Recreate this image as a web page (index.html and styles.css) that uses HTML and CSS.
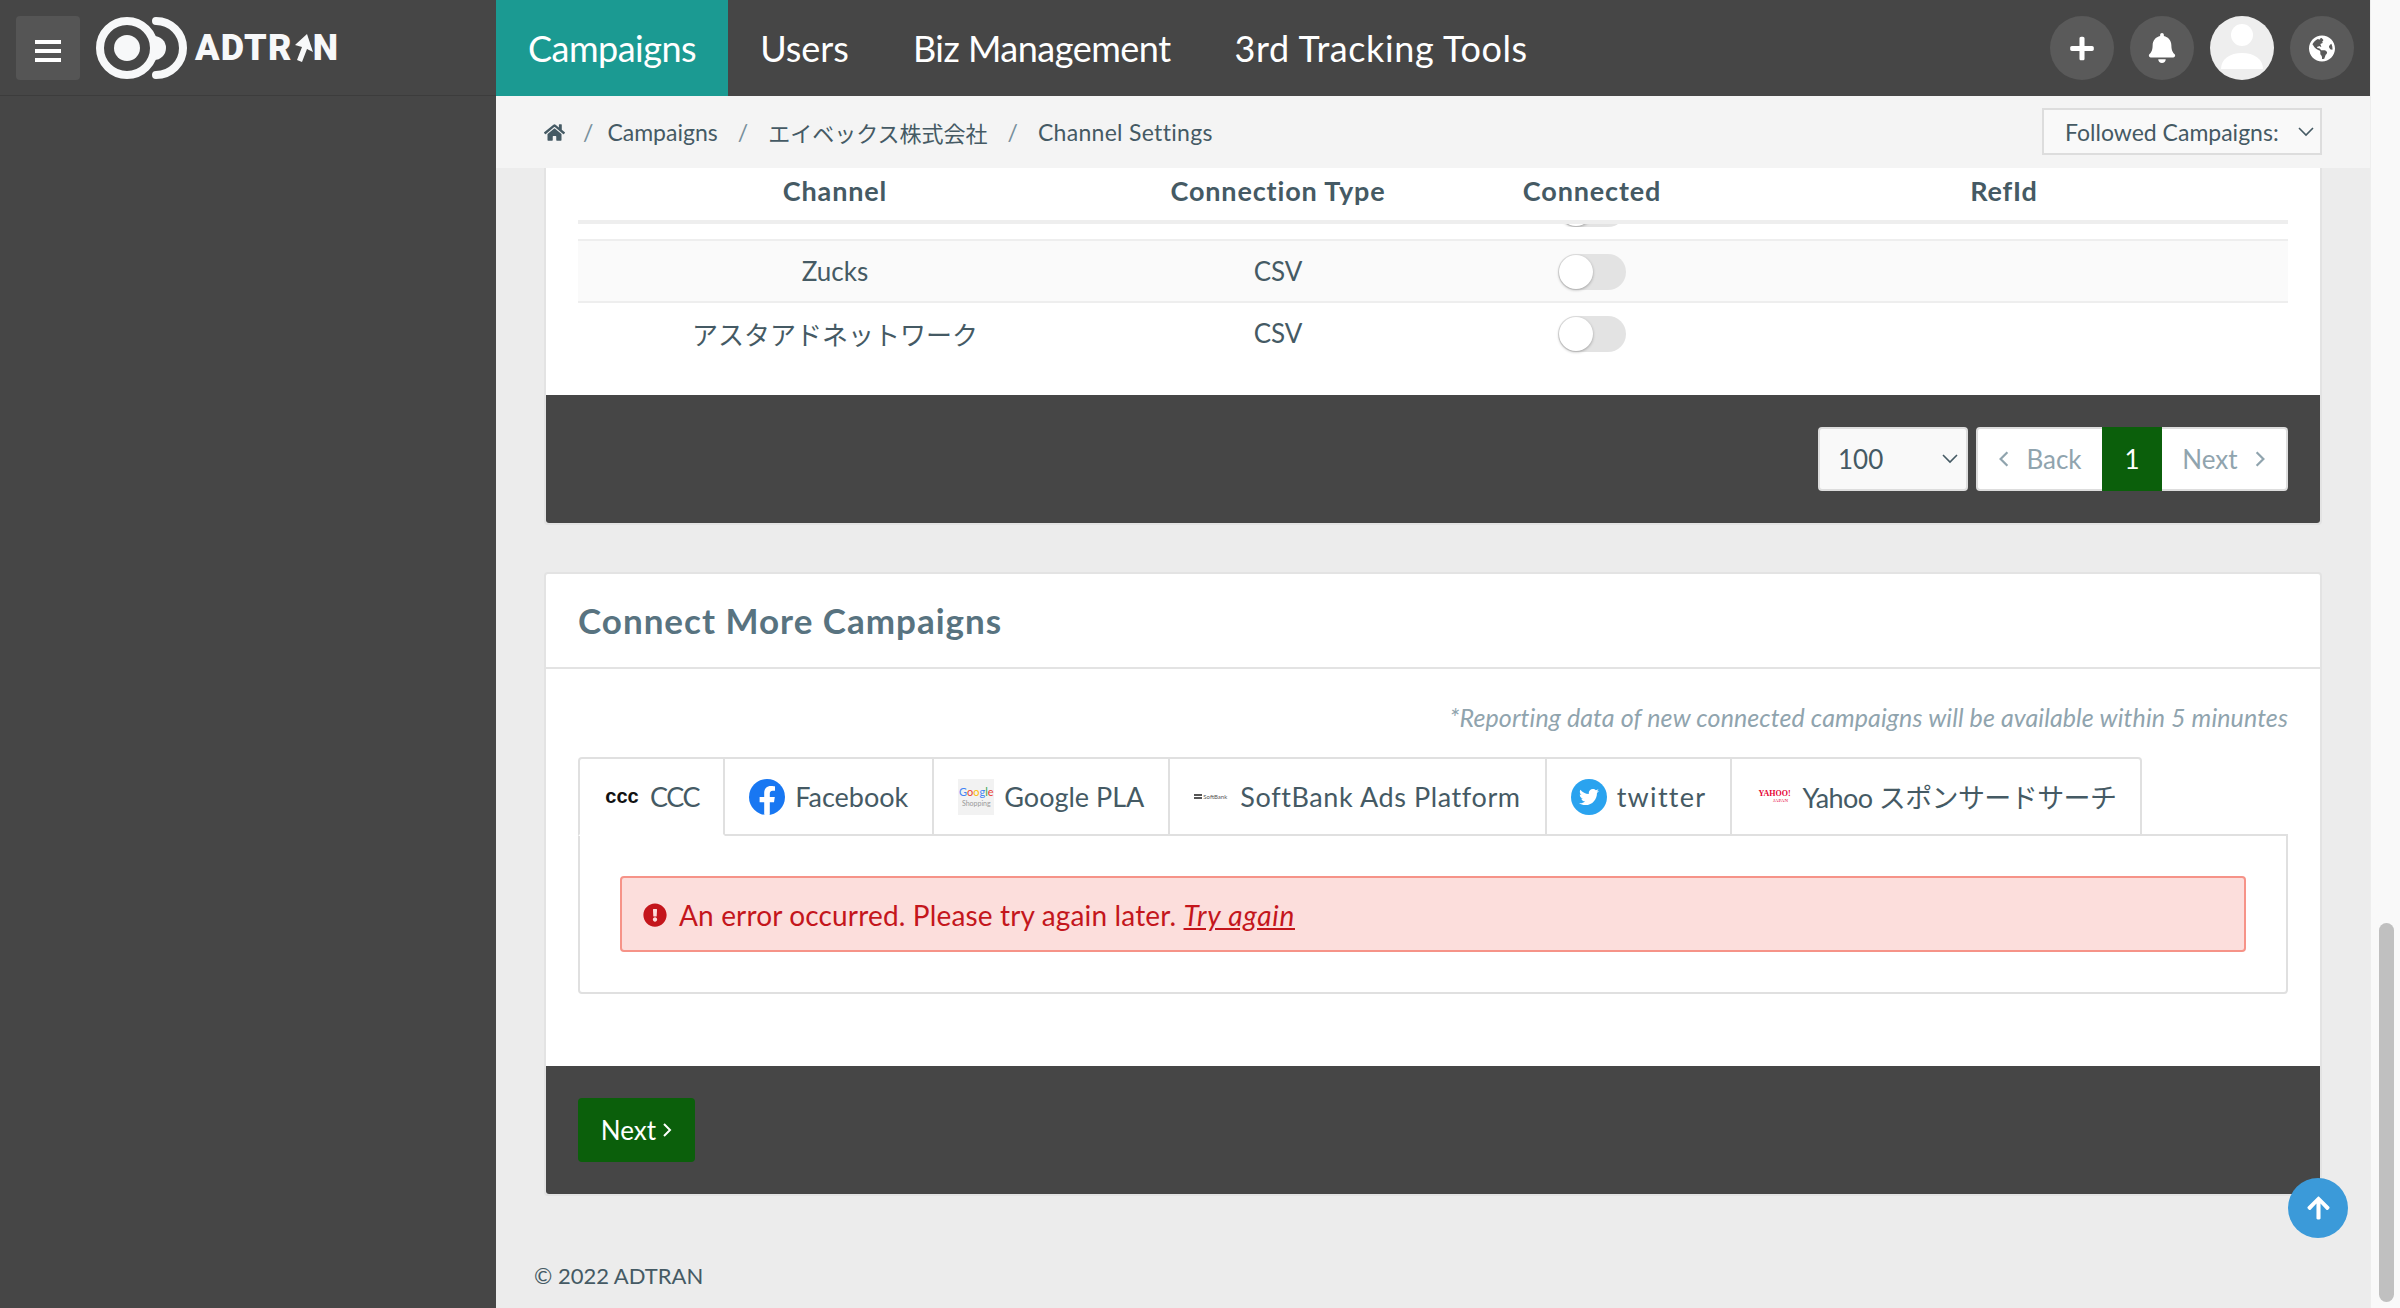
FILE: index.html
```html
<!DOCTYPE html>
<html lang="en">
<head>
    <meta charset="UTF-8">
    <meta name="viewport" content="width=device-width, initial-scale=1.0">
    <title>Channel Settings</title>
    <link rel="stylesheet" href="styles.css">
</head>
<body>
    <div class="page">
        <div class="app">
            <header class="topbar">
                <div class="brand">
                    <button class="menu-button"><span></span><span></span><span></span></button>
                    <svg class="logo-mark" viewBox="0 0 92 64">
                        <circle cx="31" cy="32" r="27" fill="none" stroke="#f7f8f9" stroke-width="8"/>
                        <circle cx="31" cy="32" r="13" fill="#f7f8f9"/>
                        <path d="M58 20A12 12 0 0 1 58 44Z" fill="#f7f8f9"/>
                        <path d="M60 5A27 27 0 0 1 60 59" fill="none" stroke="#f7f8f9" stroke-width="8" stroke-linecap="round"/>
                    </svg>
                    <span class="logo-text">ADTR<svg class="logo-arrow" viewBox="0 0 20 28"><path d="M14 0L20 18L14 15L9 28L4 26L9 13L2 11Z" fill="#f7f8f9"/></svg>N</span>
                </div>
                <nav class="nav">
                    <a class="nav-item nav-campaigns active">Campaigns</a>
                    <a class="nav-item">Users</a>
                    <a class="nav-item nav-biz">Biz Management</a>
                    <a class="nav-item nav-tools">3rd Tracking Tools</a>
                </nav>
                <div class="actions">
                    <button class="round-button">
                        <svg class="icon-plus" viewBox="0 0 448 512"><path d="M416 208H272V64c0-17.67-14.33-32-32-32h-32c-17.67 0-32 14.33-32 32v144H32c-17.67 0-32 14.33-32 32v32c0 17.67 14.33 32 32 32h144v144c0 17.67 14.33 32 32 32h32c17.67 0 32-14.33 32-32V304h144c17.67 0 32-14.33 32-32v-32c0-17.67-14.33-32-32-32z"/></svg>
                    </button>
                    <button class="round-button">
                        <svg class="icon-bell" viewBox="0 0 448 512"><path d="M224 512c35.32 0 63.97-28.65 63.97-64H160.03c0 35.35 28.65 64 63.97 64zm215.39-149.71c-19.32-20.76-55.47-51.99-55.47-154.29 0-77.7-54.48-139.9-127.94-155.16V32c0-17.67-14.32-32-31.98-32s-31.98 14.33-31.98 32v20.84C118.56 68.1 64.08 130.3 64.08 208c0 102.3-36.15 133.53-55.47 154.29-6 6.45-8.66 14.16-8.61 21.71.11 16.4 12.98 32 32.1 32h383.8c19.12 0 32-15.6 32.1-32 .05-7.55-2.61-15.27-8.61-21.71z"/></svg>
                    </button>
                    <button class="round-button avatar">
                        <svg viewBox="0 0 64 64"><circle cx="32" cy="19" r="11" fill="#fff"/><path d="M11 53C11 43 20 37 32 37S53 43 53 53Z" fill="#fff"/></svg>
                    </button>
                    <button class="round-button">
                        <svg class="icon-globe" viewBox="0 0 496 512"><path d="M248 8C111.03 8 0 119.03 0 256s111.03 248 248 248 248-111.03 248-248S384.97 8 248 8zm82.29 357.6c-3.9 3.88-7.99 7.95-11.31 11.28-2.99 3-5.1 6.7-6.17 10.71-1.51 5.66-2.73 11.38-4.77 16.87l-17.39 46.85c-13.76 3-28 4.69-42.65 4.69v-27.38c1.69-12.62-7.64-36.26-22.63-51.25-6-6-9.37-14.14-9.37-22.63v-32.01c0-11.64-6.27-22.34-16.46-27.97-14.37-7.95-34.81-19.06-48.81-26.11-11.48-5.78-22.1-13.14-31.65-21.75l-.8-.72a114.792 114.792 0 0 1-18.06-20.74c-9.38-13.77-24.66-36.42-34.59-51.14 20.47-45.5 57.36-82.04 103.2-101.89l24.01 12.01C203.48 89.74 216 82.01 216 70.11v-11.3c7.99-1.29 16.12-2.11 24.39-2.4l28.3 28.3c6.25 6.25 6.25 16.38 0 22.63L264 112l-10.34 10.34c-3.12 3.12-3.12 8.19 0 11.31l4.69 4.69c3.12 3.12 3.12 8.19 0 11.31l-8 8a8.008 8.008 0 0 1-5.66 2.34h-8.99c-2.08 0-4.08.81-5.58 2.27l-9.92 9.65a8.008 8.008 0 0 0-1.58 9.31l15.59 31.19c2.66 5.32-1.21 11.58-7.15 11.58h-5.64c-1.93 0-3.79-.7-5.24-1.96l-9.28-8.06a16.017 16.017 0 0 0-15.55-3.1l-31.17 10.39a11.95 11.95 0 0 0-8.17 11.34c0 4.53 2.56 8.66 6.61 10.69l11.08 5.54c9.41 4.71 19.79 7.16 30.31 7.16s22.59 27.29 32 32h66.75c8.49 0 16.62 3.37 22.63 9.37l13.69 13.69a30.503 30.503 0 0 1 8.93 21.57 46.536 46.536 0 0 1-13.72 32.98zM417 274.25c-5.79-1.45-10.84-5-14.15-9.97l-17.98-26.97a23.97 23.97 0 0 1 0-26.62l19.59-29.38c2.32-3.47 5.5-6.29 9.24-8.15l12.98-6.49C440.2 193.59 448 223.87 448 256c0 8.67-.74 17.16-1.82 25.54L417 274.25z"/></svg>
                    </button>
                </div>
            </header>

            <div class="body-row">
                <aside class="sidebar"></aside>
                <main class="main">
                    <div class="breadcrumb-bar">
                        <div class="breadcrumb">
                            <svg class="icon-home" viewBox="0 0 576 512"><path d="M280.37 148.26L96 300.11V464a16 16 0 0 0 16 16l112.06-.29a16 16 0 0 0 15.92-16V368a16 16 0 0 1 16-16h64a16 16 0 0 1 16 16v95.64a16 16 0 0 0 16 16.05L464 480a16 16 0 0 0 16-16V300L295.67 148.26a12.19 12.19 0 0 0-15.3 0zM571.6 251.47L488 182.56V44.05a12 12 0 0 0-12-12h-56a12 12 0 0 0-12 12v72.61L318.47 43a48 48 0 0 0-61 0L4.34 251.47a12 12 0 0 0-1.6 16.9l25.5 31A12 12 0 0 0 45.15 301l235.22-193.74a12.19 12.19 0 0 1 15.3 0L530.9 301a12 12 0 0 0 16.9-1.6l25.5-31a12 12 0 0 0-1.7-16.93z"/></svg>
                            <span class="sep sep-first">/</span>
                            <span>Campaigns</span>
                            <span class="sep">/</span>
                            <span class="crumb-jp">エイベックス株式会社</span>
                            <span class="sep">/</span>
                            <span class="crumb-last">Channel Settings</span>
                        </div>
                        <div class="followed">
                            <span>Followed Campaigns:</span>
                            <svg class="chevron" viewBox="0 0 16 10"><path d="M1 1L8 8L15 1" fill="none" stroke="#455a64" stroke-width="1.6"/></svg>
                        </div>
                    </div>

                    <div class="content">
                        <section class="card">
                            <div class="card-body table-body">
                                <table class="channel-table">
                                    <thead>
                                        <tr>
                                            <th class="col-channel">Channel</th>
                                            <th class="col-type">Connection Type</th>
                                            <th class="col-connected">Connected</th>
                                            <th class="col-ref">RefId</th>
                                        </tr>
                                    </thead>
                                    <tbody>
                                        <tr class="row-cut">
                                            <td></td><td></td>
                                            <td><div class="cut"><span class="toggle"></span></div></td>
                                            <td></td>
                                        </tr>
                                        <tr class="row-alt">
                                            <td>Zucks</td><td>CSV</td>
                                            <td><span class="toggle"></span></td>
                                            <td></td>
                                        </tr>
                                        <tr>
                                            <td>アスタアドネットワーク</td><td>CSV</td>
                                            <td><span class="toggle"></span></td>
                                            <td></td>
                                        </tr>
                                    </tbody>
                                </table>
                            </div>
                            <div class="card-foot foot-right">
                                <div class="page-size">
                                    <span>100</span>
                                    <svg class="chevron" viewBox="0 0 16 10"><path d="M1 1L8 8L15 1" fill="none" stroke="#455a64" stroke-width="1.6"/></svg>
                                </div>
                                <div class="pager">
                                    <a class="pager-item"><svg class="pager-arrow" viewBox="0 0 10 16"><path d="M8 2L2 8L8 14" fill="none" stroke="#90a4ae" stroke-width="2"/></svg>Back</a>
                                    <a class="pager-item current">1</a>
                                    <a class="pager-item">Next<svg class="pager-arrow" viewBox="0 0 10 16"><path d="M2 2L8 8L2 14" fill="none" stroke="#90a4ae" stroke-width="2"/></svg></a>
                                </div>
                            </div>
                        </section>

                        <section class="card">
                            <h2 class="card-title">Connect More Campaigns</h2>
                            <div class="card-body connect-body">
                                <p class="note">*Reporting data of new connected campaigns will be available within 5 minuntes</p>
                                <div class="tabs">
                                    <a class="tab tab-ccc active">
                                        <span class="tab-logo logo-ccc">ccc</span>CCC
                                    </a>
                                    <a class="tab">
                                        <svg class="tab-logo" viewBox="0 0 36 36"><circle cx="18" cy="18" r="18" fill="#1877f2"/><path d="M25 23.2l.8-5.2h-5V14.6c0-1.4.7-2.8 2.9-2.8H26V7.400c0 0-2-.4-4-.4-4.100 0-6.800 2.500-6.800 7V18h-4.600v5.200h4.600v12.600c.9.200 1.900.200 2.800.200s1.900 0 2.800-.200V23.200z" fill="#fff"/></svg>Facebook
                                    </a>
                                    <a class="tab">
                                        <span class="tab-logo logo-google"><span class="google-word"><i class="g-b">G</i><i class="g-r">o</i><i class="g-y">o</i><i class="g-b">g</i><i class="g-g">l</i><i class="g-r">e</i></span><span class="google-sub">Shopping</span></span>Google PLA
                                    </a>
                                    <a class="tab tab-softbank">
                                        <span class="tab-logo logo-softbank"><span class="soft-bars"></span>SoftBank</span>SoftBank Ads Platform
                                    </a>
                                    <a class="tab tab-twitter">
                                        <svg class="tab-logo" viewBox="0 0 36 36"><circle cx="18" cy="18" r="18" fill="#2aa3ef"/><svg x="8" y="8" width="20" height="20" viewBox="0 0 512 512"><path fill="#fff" d="M459.37 151.716c.325 4.548.325 9.097.325 13.645 0 138.72-105.583 298.558-298.558 298.558-59.452 0-114.68-17.219-161.137-47.106 8.447.974 16.568 1.299 25.34 1.299 49.055 0 94.213-16.568 130.274-44.832-46.132-.975-84.792-31.188-98.112-72.772 6.498.974 12.995 1.624 19.818 1.624 9.421 0 18.843-1.3 27.614-3.573-48.081-9.747-84.143-51.98-84.143-102.985v-1.299c13.969 7.797 30.214 12.67 47.431 13.319-28.264-18.843-46.781-51.005-46.781-87.391 0-19.492 5.197-37.36 14.294-52.954 51.655 63.675 129.3 105.258 216.365 109.807-1.624-7.797-2.599-15.918-2.599-24.04 0-57.828 46.782-104.934 104.934-104.934 30.213 0 57.502 12.67 76.67 33.137 23.715-4.548 46.456-13.32 66.599-25.34-7.798 24.366-24.366 44.833-46.132 57.827 21.117-2.273 41.584-8.122 60.426-16.243-14.292 20.791-32.161 39.308-52.628 54.253z"/></svg></svg>twitter
                                    </a>
                                    <a class="tab tab-yahoo">
                                        <span class="tab-logo logo-yahoo"><b>YAHOO!</b><span>JAPAN</span></span>Yahoo スポンサードサーチ
                                    </a>
                                </div>
                                <div class="tab-panel">
                                    <div class="alert">
                                        <svg class="icon-alert" viewBox="0 0 512 512"><path d="M504 256c0 136.997-111.043 248-248 248S8 392.997 8 256C8 119.083 119.043 8 256 8s248 111.083 248 248zm-248 50c-25.405 0-46 20.595-46 46s20.595 46 46 46 46-20.595 46-46-20.595-46-46-46zm-43.673-165.346l7.418 136c.347 6.364 5.609 11.346 11.982 11.346h48.546c6.373 0 11.635-4.982 11.982-11.346l7.418-136c.375-6.874-5.098-12.654-11.982-12.654h-63.383c-6.884 0-12.356 5.78-11.981 12.654z"/></svg>
                                        <span>An error occurred. Please try again later. <a class="alert-link">Try again</a></span>
                                    </div>
                                </div>
                            </div>
                            <div class="card-foot">
                                <button class="next-button">Next<svg class="next-arrow" viewBox="0 0 10 16"><path d="M2 2L8 8L2 14" fill="none" stroke="#fff" stroke-width="2"/></svg></button>
                            </div>
                        </section>

                        <footer class="copyright">© 2022 ADTRAN</footer>
                    </div>
                </main>
            </div>
        </div>

        <div class="scroll-track"><div class="scroll-thumb"></div></div>
    </div>

    <button class="back-top">
        <svg viewBox="0 0 448 512"><path d="M34.9 289.5l-22.2-22.2c-9.4-9.4-9.4-24.6 0-33.9L207 39c9.4-9.4 24.6-9.4 33.9 0l194.3 194.3c9.4 9.4 9.4 24.6 0 33.9L413 289.4c-9.5 9.5-25 9.3-34.3-.4L264 168.6V456c0 13.3-10.7 24-24 24h-32c-13.3 0-24-10.7-24-24V168.6L69.2 289.1c-9.3 9.8-24.8 10-34.3.4z"/></svg>
    </button>
</body>
</html>
```

FILE: styles.css
```css
* {
    box-sizing: border-box;
}
body {
    margin: 0;
    height: 1308px;
    overflow: hidden;
    font-family: Lato, "Noto Sans CJK JP", sans-serif;
    color: #455a64;
    background-color: #ececec;
}
button {
    font-family: inherit;
    border: none;
    padding: 0;
}
.page {
    display: flex;
    height: 1308px;
}
.app {
    width: 2370px;
    display: flex;
    flex-direction: column;
}

/* top bar */
.topbar {
    display: flex;
    height: 96px;
    flex: none;
    background-color: #464646;
}
.brand {
    width: 496px;
    display: flex;
    align-items: center;
    padding-left: 16px;
    border-bottom: 1px solid #3c3c3c;
}
.menu-button {
    width: 64px;
    height: 64px;
    display: flex;
    flex-direction: column;
    align-items: center;
    justify-content: center;
    gap: 5px;
    padding-top: 6px;
    background-color: #555;
    border-radius: 4px;
}
.menu-button span {
    width: 26px;
    height: 4px;
    background-color: #fff;
}
.logo-mark {
    width: 92px;
    height: 64px;
    margin-left: 16px;
}
.logo-text {
    margin-left: 7px;
    font-family: Roboto, sans-serif;
    font-weight: 900;
    font-size: 36px;
    line-height: 40px;
    color: #f7f8f9;
    display: flex;
    align-items: center;
    letter-spacing: 1.3px;
}
.logo-arrow {
    width: 20px;
    height: 28px;
}
.nav {
    display: flex;
}
.nav-item {
    padding: 0 32px;
    font-size: 36px;
    line-height: 96px;
    color: #fff;
}
.nav-item.active {
    background-color: #1b9a92;
}
.nav-campaigns {
    letter-spacing: -0.5px;
}
.nav-biz {
    letter-spacing: -0.5px;
}
.nav-tools {
    letter-spacing: 0.6px;
}
.actions {
    margin-left: auto;
    display: flex;
    gap: 16px;
    align-items: center;
    padding-right: 16px;
}
.round-button {
    width: 64px;
    height: 64px;
    border-radius: 50%;
    background-color: #5a5a5a;
    display: flex;
    align-items: center;
    justify-content: center;
    overflow: hidden;
    fill: #fff;
}
.round-button.avatar {
    background-color: #eee;
}
.avatar svg {
    width: 64px;
    height: 64px;
}
.icon-plus {
    width: 24px;
    height: 27px;
}
.icon-bell {
    width: 28px;
    height: 30px;
}
.icon-globe {
    width: 26px;
    height: 27px;
}

/* layout below the bar */
.body-row {
    flex: 1;
    display: flex;
    min-height: 0;
}
.sidebar {
    width: 496px;
    flex: none;
    background-color: #464646;
}
.main {
    flex: 1;
    min-width: 0;
}
.breadcrumb-bar {
    height: 72px;
    padding: 12px 48px 0;
    display: flex;
    justify-content: space-between;
    background-color: #f4f4f4;
}
.breadcrumb {
    display: flex;
    align-items: center;
    height: 48px;
    font-size: 23px;
}
.crumb-jp {
    font-size: 22px;
}
.crumb-last {
    letter-spacing: 0.3px;
}
.icon-home {
    width: 21px;
    height: 19px;
    fill: #455a64;
}
.sep {
    color: #78909c;
    margin: 0 20px;
}
.sep-first {
    margin: 0 14px 0 18px;
}
.followed {
    width: 280px;
    height: 47px;
    display: flex;
    align-items: center;
    justify-content: space-between;
    padding: 0 6px 0 21px;
    border: 2px solid #ddd;
    background-color: #f9f9f9;
    font-size: 23px;
}
.chevron {
    width: 16px;
    height: 10px;
}

/* cards */
.content {
    padding: 0 48px;
}
.card {
    border: 2px solid #e3e3e3;
    border-radius: 4px;
    background-color: #fff;
    margin-bottom: 46px;
}
.card:first-child {
    border-top: none;
    border-radius: 0 0 4px 4px;
    margin-bottom: 47px;
}
.card-body {
    padding: 0 32px;
}
.table-body {
    padding-bottom: 32px;
}
.channel-table {
    width: 100%;
    border-collapse: separate;
    border-spacing: 0;
    table-layout: fixed;
    font-size: 26px;
    text-align: center;
}
.channel-table th {
    height: 56px;
    padding: 0 0 8px;
    font-size: 27px;
    letter-spacing: 0.85px;
    font-weight: 700;
    border-bottom: 4px solid #eee;
}
.col-channel { width: 514px; }
.col-type { width: 372px; }
.col-connected { width: 256px; }
.channel-table td {
    height: 62px;
    padding: 0;
    border-bottom: 2px solid #eee;
    vertical-align: middle;
}
.channel-table tr:last-child td {
    height: 60px;
    border-bottom: none;
}
.row-alt td {
    background-color: #fafafa;
}
.channel-table .row-cut td {
    height: 17px;
    vertical-align: top;
}
.cut {
    height: 3px;
    overflow: hidden;
    position: relative;
}
.cut .toggle {
    position: absolute;
    left: 94px;
    bottom: 0;
}
.toggle {
    display: inline-block;
    width: 68px;
    height: 36px;
    border-radius: 18px;
    background-color: #e3e3e3;
    vertical-align: middle;
    position: relative;
}
.toggle::after {
    content: "";
    position: absolute;
    left: 1px;
    top: 1px;
    width: 34px;
    height: 34px;
    border-radius: 50%;
    background-color: #fff;
    box-shadow: 0 1px 3px rgba(0,0,0,0.3);
}
.card-foot {
    height: 128px;
    padding: 32px;
    display: flex;
    background-color: #464646;
    border-radius: 0 0 3px 3px;
}
.foot-right {
    justify-content: flex-end;
    gap: 8px;
}
.page-size {
    width: 150px;
    height: 64px;
    display: flex;
    align-items: center;
    justify-content: space-between;
    padding: 0 8px 0 18px;
    background-color: #f9f9f9;
    border: 2px solid #ddd;
    border-radius: 4px;
    font-size: 26px;
}
.pager {
    width: 312px;
    height: 64px;
    display: flex;
    background-color: #fff;
    border: 2px solid #ddd;
    border-radius: 4px;
    font-size: 26px;
    color: #90a4ae;
}
.pager-item {
    flex: 1;
    display: flex;
    align-items: center;
    justify-content: center;
    gap: 16px;
}
.pager-item.current {
    flex: none;
    width: 60px;
    margin: -2px 0;
    background-color: #0b5f0b;
    color: #fff;
}
.pager-arrow {
    width: 12px;
    height: 18px;
}
.card-title {
    margin: 0;
    height: 95px;
    padding-left: 32px;
    font-size: 35px;
    letter-spacing: 1px;
    line-height: 93px;
    font-weight: 700;
    color: #587380;
    border-bottom: 2px solid #e3e3e3;
}
.connect-body {
    padding-bottom: 72px;
}
.note {
    margin: 0;
    height: 88px;
    padding-top: 32px;
    font-size: 25px;
    letter-spacing: 0.1px;
    line-height: 32px;
    font-style: italic;
    text-align: right;
    color: #90a4ae;
}
.tabs {
    display: flex;
    height: 79px;
    position: relative;
    z-index: 1;
    margin-bottom: -2px;
}
.tab {
    display: flex;
    align-items: center;
    gap: 10px;
    height: 79px;
    padding: 0 24px;
    font-size: 27px;
    white-space: nowrap;
    border: 2px solid #e0e0e0;
    border-left: none;
    background-color: #fff;
}
.tab:first-child {
    border-left: 2px solid #e0e0e0;
    border-radius: 4px 0 0 0;
}
.tab:last-child {
    border-radius: 0 4px 0 0;
}
.tab.active {
    border-bottom-color: #fff;
}
.tab-ccc {
    letter-spacing: -1.4px;
}
.tab-softbank {
    letter-spacing: 0.6px;
}
.tab-twitter {
    letter-spacing: 1.3px;
}
.tab-yahoo {
    letter-spacing: -0.6px;
}
.tab-logo {
    width: 36px;
    height: 36px;
    flex: none;
    letter-spacing: 0;
}
.logo-ccc {
    font-family: "Liberation Sans", sans-serif;
    font-weight: 700;
    font-size: 20px;
    line-height: 34px;
    color: #111;
    text-align: center;
}
.logo-google {
    background-color: #f2f2f2;
    display: flex;
    flex-direction: column;
    align-items: center;
    justify-content: center;
}
.google-word {
    font-size: 11px;
    line-height: 12px;
}
.google-word i {
    font-style: normal;
}
.g-b { color: #4285f4; }
.g-r { color: #ea4335; }
.g-y { color: #fbbc05; }
.g-g { color: #34a853; }
.google-sub {
    font-size: 7px;
    line-height: 10px;
    color: #999;
}
.logo-softbank {
    display: flex;
    align-items: center;
    gap: 1px;
    font-size: 6px;
    color: #555;
}
.soft-bars {
    width: 8px;
    height: 5px;
    border-top: 2px solid #555;
    border-bottom: 2px solid #555;
}
.logo-yahoo {
    display: flex;
    flex-direction: column;
    align-items: center;
    justify-content: center;
    font-family: "Liberation Serif", serif;
    font-size: 8px;
    line-height: 8px;
    color: #e60033;
}
.logo-yahoo span {
    font-size: 5px;
    line-height: 5px;
    margin-left: 12px;
}
.tab-panel {
    height: 160px;
    padding: 40px 40px 0;
    border: 2px solid #e0e0e0;
    border-radius: 0 0 4px 4px;
}
.alert {
    height: 76px;
    display: flex;
    align-items: center;
    gap: 12px;
    padding: 2px 0 0 21px;
    background-color: #fcdedc;
    border: 2px solid #f69388;
    border-radius: 4px;
    color: #c4161c;
    font-size: 28px;
    letter-spacing: 0.15px;
}
.icon-alert {
    width: 24px;
    height: 24px;
    fill: #c4161c;
}
.alert-link {
    font-style: italic;
    text-decoration: underline;
    letter-spacing: 0.75px;
}
.next-button {
    width: 117px;
    height: 64px;
    display: flex;
    align-items: center;
    justify-content: center;
    gap: 6px;
    background-color: #0b5f0b;
    border-radius: 4px;
    color: #fff;
    font-size: 26px;
}
.next-arrow {
    width: 10px;
    height: 16px;
}
.copyright {
    margin: 0 -10px;
    font-size: 22px;
    line-height: 30px;
    padding-top: 19px;
}

/* fake browser scrollbar */
.scroll-track {
    width: 30px;
    height: 1308px;
    padding: 923px 6px 6px 8px;
    background-color: #f9f9f9;
    border-left: 1px solid #eee;
}
.scroll-thumb {
    height: 100%;
    border-radius: 8px;
    background-color: #c0c0c0;
}
.back-top {
    position: fixed;
    right: 52px;
    bottom: 70px;
    width: 60px;
    height: 60px;
    border-radius: 50%;
    background-color: #3b9ad9;
    fill: #fff;
    display: flex;
    align-items: center;
    justify-content: center;
}
.back-top svg {
    width: 23px;
    height: 26px;
}
```
